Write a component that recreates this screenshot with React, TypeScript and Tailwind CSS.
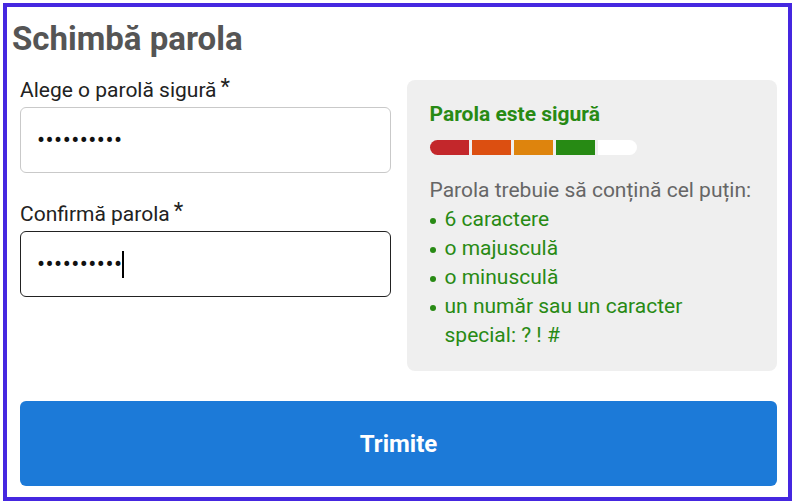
import React from 'react';

const rules = ['6 caractere', 'o majusculă', 'o minusculă'];
const strength = ['bg-[#c3272b]', 'bg-[#dc4f11]', 'bg-[#de840d]', 'bg-[#278a14]', 'bg-white'];

const Label: React.FC<{ text: string }> = ({ text }) => (
  <div className="h-[24px] text-[21px] leading-[24px] text-[#222]">
    {text}
    <span className="ml-[4px] align-top text-[22px] leading-[18px]">*</span>
  </div>
);

const App: React.FC = () => {
  return (
    <div className="min-h-screen bg-white pt-[3px] pl-[3px] font-['Roboto',sans-serif]">
      <div className="box-border flex h-[498px] w-[789px] flex-col border-[4px] border-[#4527e0] bg-white">
        <h1 className="pt-[12px] pl-[5px] text-[33px] leading-[40px] font-bold text-[#555]">Schimbă parola</h1>

        <div className="mt-[19px] pl-[13px] pr-[11px]">
          <div className="grid grid-cols-2 gap-[16px]">
            {/* Left: password fields */}
            <div>
              <Label text="Alege o parolă sigură" />
              <div className="mt-[5px] flex h-[66px] items-center rounded-[6px] border border-[#c9c9c9] px-[16px] text-[24px] tracking-[0.45px] text-[#111]">
                ••••••••••
              </div>

              <div className="mt-[29px]">
                <Label text="Confirmă parola" />
              </div>
              <div className="mt-[5px] flex h-[66px] items-center rounded-[6px] border border-[#222] px-[16px] text-[24px] tracking-[0.45px] text-[#111]">
                ••••••••••
                <span className="inline-block h-[27px] w-[2px] bg-black" />
              </div>
            </div>

            {/* Right: strength panel */}
            <div className="mt-[2px] rounded-[8px] bg-[#efefef] px-[23px] pt-[22px] pb-[21px]">
              <div className="text-[21px] leading-[24px] font-bold text-[#288a14]">Parola este sigură</div>
              <div className="mt-[14px] flex gap-[3px]">
                {strength.map((c, i) => (
                  <div
                    key={i}
                    className={`h-[15px] w-[39px] ${c} ${i === 0 ? 'rounded-l-full' : ''} ${i === 4 ? 'rounded-r-full' : ''}`}
                  />
                ))}
              </div>
              <p className="mt-[21px] text-[21px] leading-[29px] text-[#666]">Parola trebuie să conțină cel puțin:</p>
              <ul className="text-[21px] leading-[29px] text-[#288a14]">
                {rules.map((r) => (
                  <li key={r} className="flex">
                    <span className="mt-[13px] mr-[9px] h-[6px] w-[6px] shrink-0 rounded-full bg-[#288a14]" />
                    {r}
                  </li>
                ))}
                <li className="flex">
                  <span className="mt-[13px] mr-[9px] h-[6px] w-[6px] shrink-0 rounded-full bg-[#288a14]" />
                  <span>
                    un număr sau un caracter
                    <br />
                    special: ? ! #
                  </span>
                </li>
              </ul>
            </div>
          </div>

          <button className="mt-[30px] flex h-[85px] w-full items-center justify-center rounded-[6px] bg-[#1c7ad8] text-[24px] font-bold text-white">
            Trimite
          </button>
        </div>
      </div>
    </div>
  );
};

export default App;
